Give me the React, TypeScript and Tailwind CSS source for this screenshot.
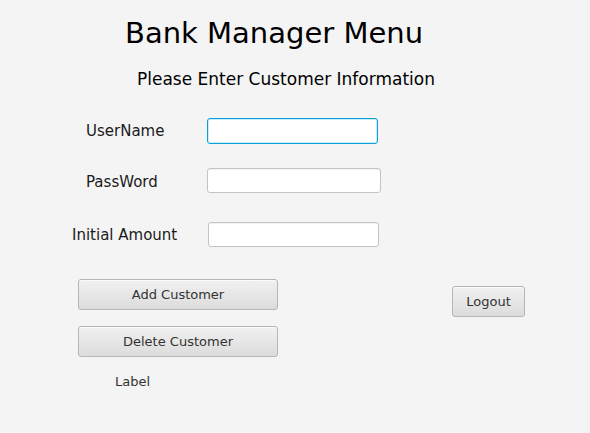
// App.tsx - Bank Manager Menu (JavaFX style form)
const fieldBase =
  "bg-white rounded-[3px] border border-[#c4c4c4] shadow-[inset_0_1px_1px_rgba(0,0,0,0.06)]";

const btnBase =
  "flex items-center justify-center rounded-[3px] border border-[#b6b6b6] bg-gradient-to-b from-[#f1f1f1] to-[#dcdcdc] text-[13px] leading-4 text-[#333333] shadow-[inset_0_1px_0_rgba(255,255,255,0.7)]";

const App = () => {
  return (
    <div className="w-[590px] h-[433px] bg-[#f4f4f4] text-[#111] font-['DejaVu_Sans',sans-serif] overflow-hidden">
      <h1 className="pt-[19px] pl-[125px] text-[29px] leading-[29px] font-normal text-black">
        Bank Manager Menu
      </h1>
      <p className="mt-[23px] pl-[137px] text-[17px] leading-[17px] text-black">
        Please Enter Customer Information
      </p>

      {/* form rows */}
      <div className="mt-[30px] pl-[86px] flex items-start">
        <label className="w-[121px] mt-[4px] text-[15px] leading-[18px] text-[#1a1a1a]">
          UserName
        </label>
        <input
          type="text"
          className="w-[171px] h-[26px] rounded-[3px] bg-white border border-[#0a9fd6] shadow-[inset_0_0_0_1px_#c9ecf8] outline-none"
        />
      </div>

      <div className="mt-[24px] pl-[86px] flex items-start">
        <label className="w-[121px] mt-[5px] text-[15px] leading-[18px] text-[#1a1a1a]">
          PassWord
        </label>
        <input type="password" className={`w-[174px] h-[25px] outline-none ${fieldBase}`} />
      </div>

      <div className="mt-[29px] pl-[72px] flex items-start">
        <label className="w-[136px] mt-[4px] text-[15px] leading-[18px] text-[#1a1a1a]">
          Initial Amount
        </label>
        <input type="text" className={`w-[171px] h-[25px] outline-none ${fieldBase}`} />
      </div>

      {/* buttons */}
      <div className="mt-[32px] pl-[78px] flex items-start">
        <div className="flex flex-col w-[200px]">
          <button className={`w-[200px] h-[31px] ${btnBase}`}>Add Customer</button>
          <button className={`mt-[16px] w-[200px] h-[31px] ${btnBase}`}>
            Delete Customer
          </button>
          <span className="mt-[17px] pl-[37px] text-[13px] leading-4 text-[#333333]">
            Label
          </span>
        </div>
        <button className={`ml-[174px] mt-[7px] w-[73px] h-[31px] ${btnBase}`}>Logout</button>
      </div>
    </div>
  );
};

export default App;
